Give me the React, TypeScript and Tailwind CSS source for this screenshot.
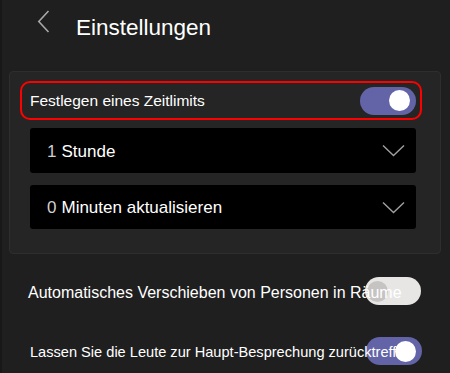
import { ReactNode } from 'react';

const Toggle = ({ on }: { on: boolean }) => (
  <div
    className={`w-[56px] h-[28px] rounded-full flex items-center px-[2px] ${
      on ? 'bg-[#6264a7] justify-end' : 'bg-[#e8e6e4] justify-start'
    }`}
  >
    <div className={`w-[21px] h-[21px] rounded-full ${on ? 'bg-white mr-[4px]' : 'bg-[#c6c4c2]'}`} />
  </div>
);

const Chevron = () => (
  <svg width="23" height="13" viewBox="0 0 23 13" fill="none">
    <path d="M1 1.5 L11.5 11.5 L22 1.5" stroke="#a0a0a0" strokeWidth="1.4" />
  </svg>
);

const Dropdown = ({ num, label, className }: { num: string; label: ReactNode; className: string }) => (
  <div className={`ml-[10px] w-[386px] bg-black rounded-[3px] flex items-center pl-[17px] pr-[11px] ${className}`}>
    <span className="text-[17px] text-[#d0d0d0] mr-[5px] pt-[2px]">{num}</span>
    <span className="text-[17px] text-white flex-1 pt-[2px]">{label}</span>
    <Chevron />
  </div>
);

export default function App() {
  return (
    <div
      className="w-[450px] h-[373px] bg-[#1f1f1f] border-l-2 border-[#181818] overflow-hidden relative"
      style={{ fontFamily: '"Liberation Sans", Arial, sans-serif' }}
    >
      <header className="h-[71px] flex items-start pt-[10px]">
        <svg className="ml-[35px]" width="13" height="23" viewBox="0 0 13 23" fill="none">
          <path d="M11.5 1 L1.8 11.5 L11.5 22" stroke="#a8a8a8" strokeWidth="1.6" />
        </svg>
        <h1 className="ml-[26px] mt-[4px] text-[22.5px] text-white leading-none pt-[3px]">Einstellungen</h1>
      </header>

      <section className="ml-[7px] w-[432px] h-[183px] bg-[#252525] border border-[#2e2e2e] rounded-[4px] pl-[10px] pt-[9px]">
        <div className="w-[402px] h-[39px] border-2 border-[#ff0000] rounded-[10px] flex items-center justify-between pl-[8px] pr-[4px]">
          <span className="text-[15.5px] text-white pt-[1px]">Festlegen eines Zeitlimits</span>
          <Toggle on />
        </div>
        <Dropdown num="1" label="Stunde" className="mt-[8px] h-[45px]" />
        <Dropdown num="0" label="Minuten aktualisieren" className="mt-[12px] h-[44px]" />
      </section>

      <div className="relative mt-[23px] h-[28px] flex items-center">
        <div className="absolute left-[363px] top-0">
          <Toggle on={false} />
        </div>
        <span className="relative ml-[26px] text-[16px] text-white pt-[3px]">Automatisches Verschieben von Personen in Räume</span>
      </div>

      <div className="relative mt-[32px] h-[28px] flex items-center">
        <div className="absolute left-[364px] top-0">
          <Toggle on />
        </div>
        <span className="relative ml-[28px] text-[14.6px] text-white whitespace-nowrap pt-[3px]">
          Lassen Sie die Leute zur Haupt-Besprechung zurücktreffen
        </span>
      </div>
    </div>
  );
}
